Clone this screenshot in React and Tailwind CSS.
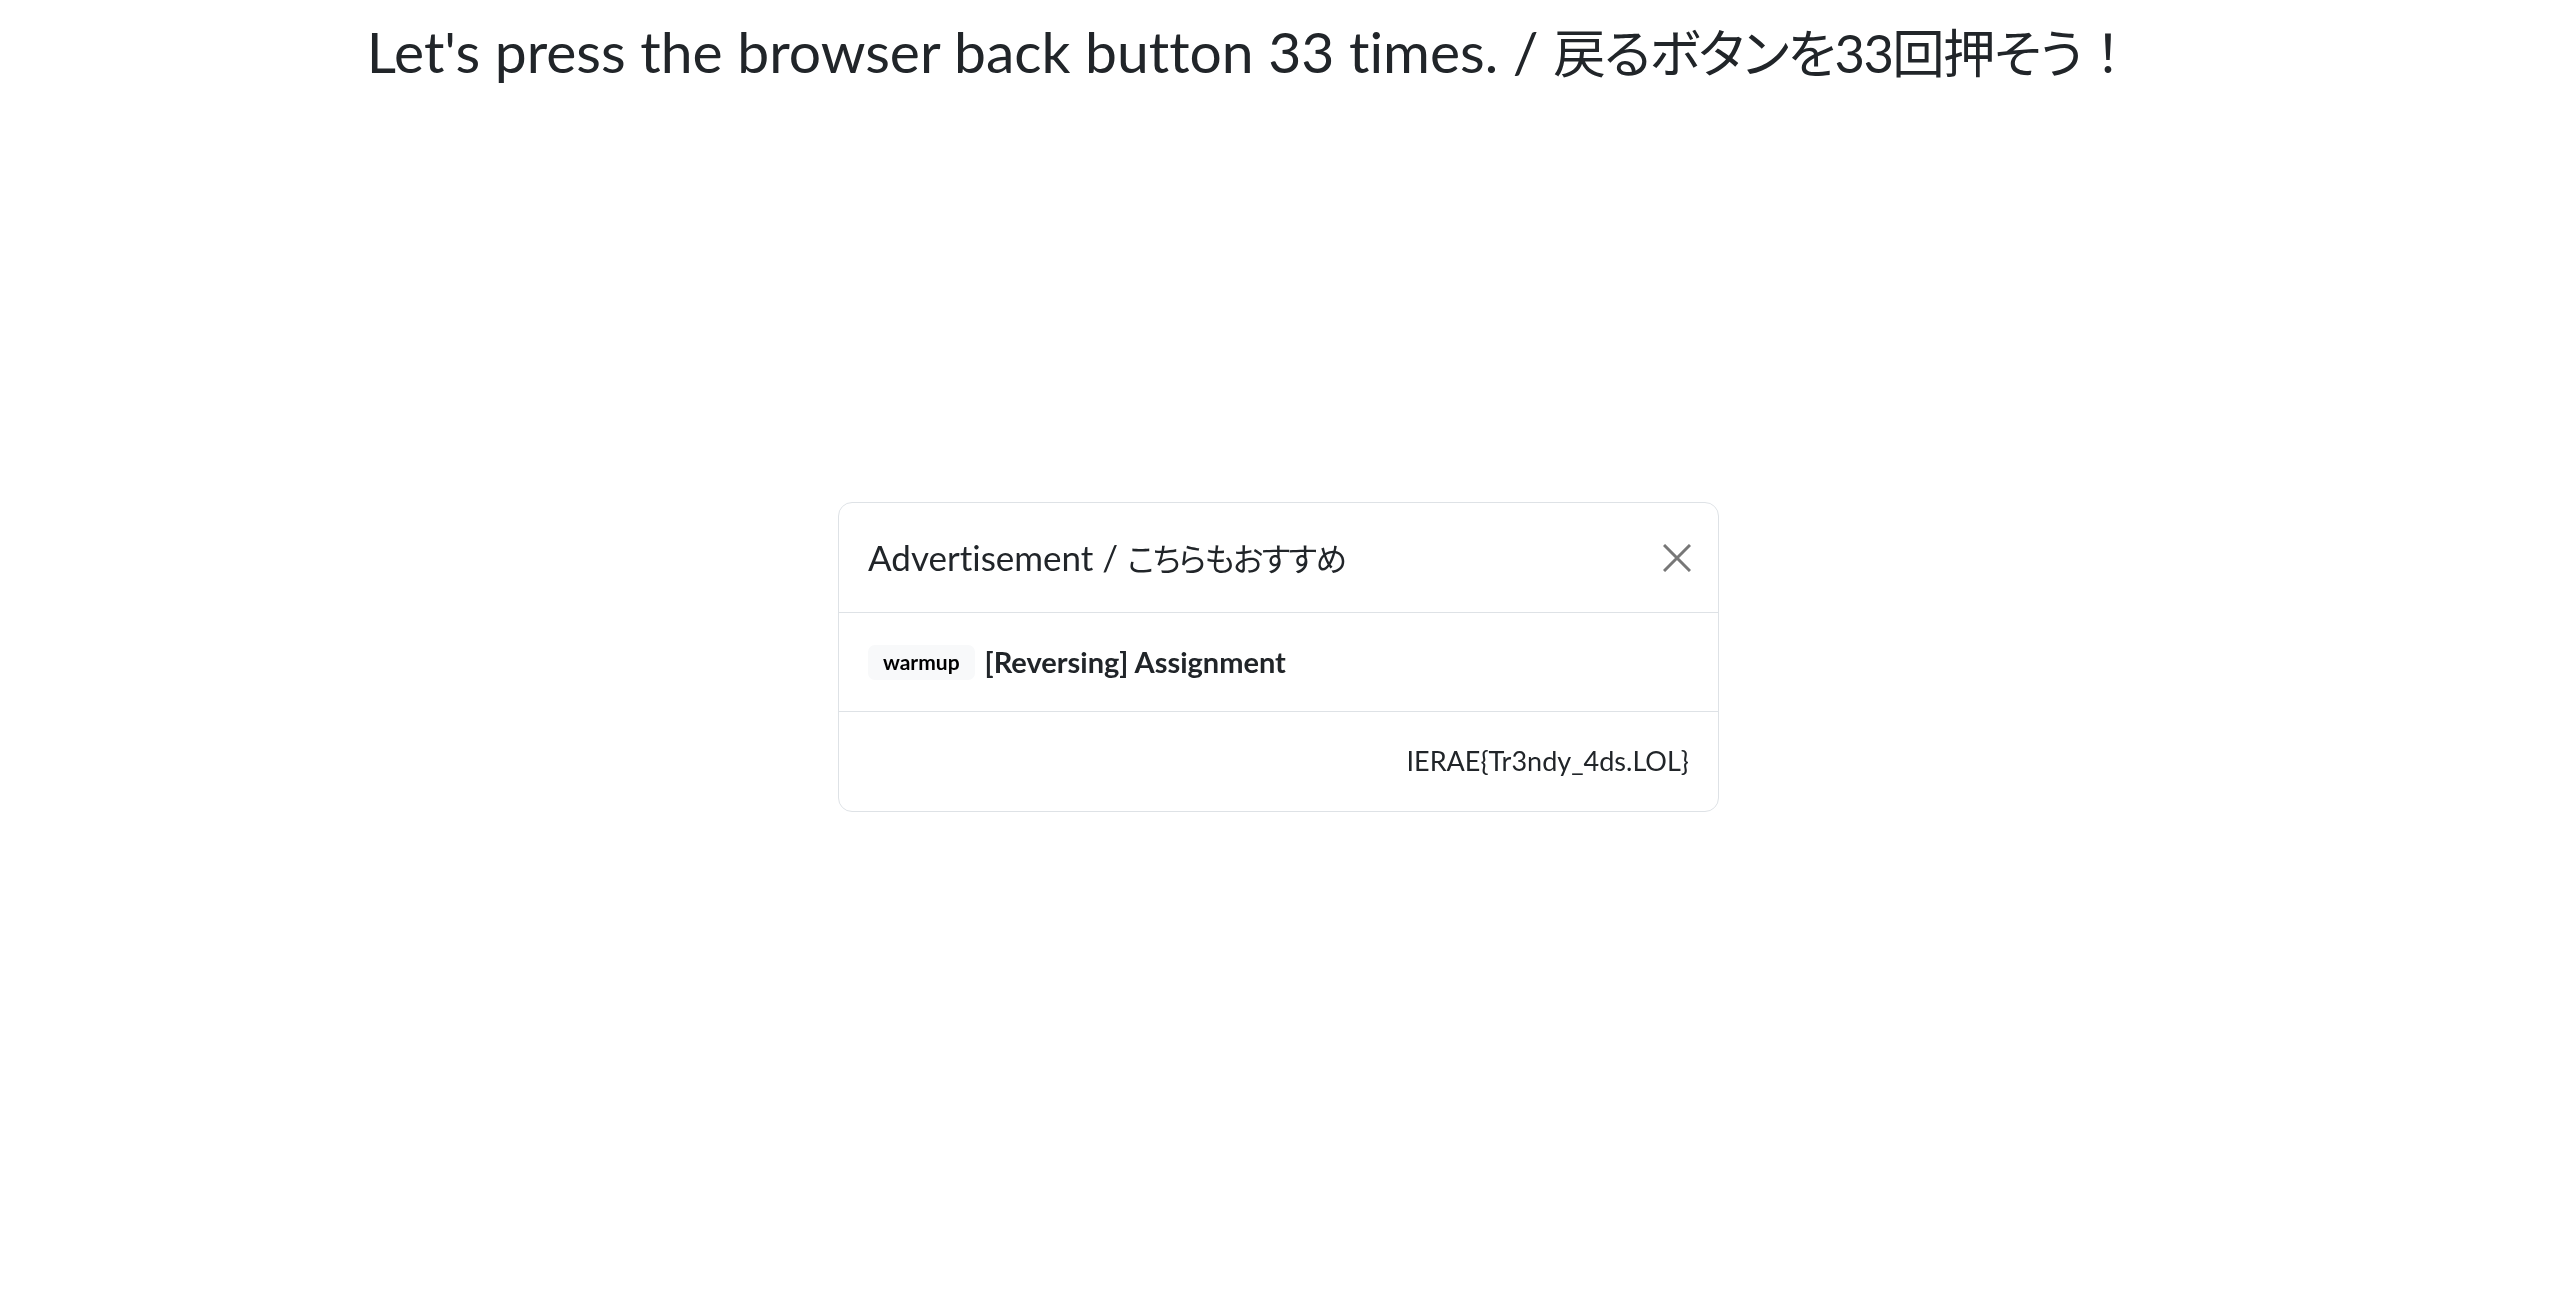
import React from "react";

const font = {
  fontFamily: 'Lato, "Noto Sans CJK JP", sans-serif',
};

function CloseIcon() {
  return (
    <svg width="28" height="28" viewBox="0 0 28 28" fill="none">
      <path
        d="M1 1 L27 27 M27 1 L1 27"
        stroke="#777777"
        strokeWidth="3"
      />
    </svg>
  );
}

export default function App() {
  return (
    <div
      className="relative min-h-[1314px] bg-white text-[#212529] [font-variant-ligatures:none]"
      style={font}
    >
      <h2 className="pt-[17px] pr-[56px] text-center text-[57px] font-normal leading-[1.2]">
        Let's press the browser back button 33 times. /{" "}
        <span className="text-[0.92em] tracking-[-0.03em] [font-feature-settings:'palt']">
          戻るボタンを33回押そう
        </span>
        <span className="text-[0.92em]">！</span>
      </h2>

      {/* advertisement modal */}
      <div className="fixed inset-0 flex items-center justify-center">
        <div className="w-[881px] overflow-hidden rounded-[14px] border border-[#dee2e6] bg-white">
          <div className="flex h-[110px] items-center justify-between border-b border-[#dee2e6] pl-[29px] pr-[27px]">
            <h5 className="text-[35px] font-normal leading-[1.5]">
              Advertisement /{" "}
              <span className="text-[0.9em] tracking-[-0.05em] [font-feature-settings:'palt']">
                こちらもおすすめ
              </span>
            </h5>
            <button className="flex h-[28px] w-[28px] items-center justify-center">
              <CloseIcon />
            </button>
          </div>
          <div className="flex h-[99px] items-center gap-[10px] border-b border-[#dee2e6] px-[29px]">
            <span className="flex h-[35px] items-center rounded-[7px] bg-[#f8f9fa] px-[15px] text-[21px] font-bold text-black">
              warmup
            </span>
            <span className="text-[29px] font-bold leading-[1.5]">
              [Reversing] Assignment
            </span>
          </div>
          <div className="flex h-[99px] items-center justify-end px-[29px]">
            <span className="text-[27px] leading-[1.5]">IERAE{"{"}Tr3ndy_4ds.LOL{"}"}</span>
          </div>
        </div>
      </div>
    </div>
  );
}
